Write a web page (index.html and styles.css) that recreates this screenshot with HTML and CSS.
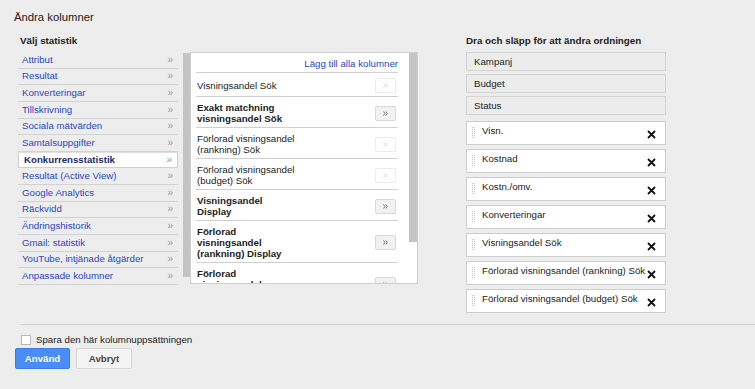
FILE: index.html
```html
<!DOCTYPE html>
<html lang="sv">
<head>
<meta charset="utf-8">
<title>Ändra kolumner</title>
<link rel="stylesheet" href="styles.css">
</head>
<body>
<div class="dialog">
  <h1 class="title">Ändra kolumner</h1>
  <div class="cols">
    <div class="cats">
      <h2 class="head">Välj statistik</h2>
      <ul class="cat-list">
        <li class="cat"><span>Attribut</span><span class="chev">»</span></li>
        <li class="cat"><span>Resultat</span><span class="chev">»</span></li>
        <li class="cat"><span>Konverteringar</span><span class="chev">»</span></li>
        <li class="cat"><span>Tillskrivning</span><span class="chev">»</span></li>
        <li class="cat"><span>Sociala mätvärden</span><span class="chev">»</span></li>
        <li class="cat"><span>Samtalsuppgifter</span><span class="chev">»</span></li>
        <li class="cat selected"><span>Konkurrensstatistik</span><span class="chev">»</span></li>
        <li class="cat"><span>Resultat (Active View)</span><span class="chev">»</span></li>
        <li class="cat"><span>Google Analytics</span><span class="chev">»</span></li>
        <li class="cat"><span>Räckvidd</span><span class="chev">»</span></li>
        <li class="cat"><span>Ändringshistorik</span><span class="chev">»</span></li>
        <li class="cat"><span>Gmail: statistik</span><span class="chev">»</span></li>
        <li class="cat"><span>YouTube, intjänade åtgärder</span><span class="chev">»</span></li>
        <li class="cat"><span>Anpassade kolumner</span><span class="chev">»</span></li>
      </ul>
    </div>
    <div class="picker">
      <div class="strip"></div>
      <div class="panel">
        <div class="panel-body">
          <div class="add-all"><a href="#">Lägg till alla kolumner</a></div>
          <div class="metric"><span class="mname">Visningsandel Sök</span><button class="add off" aria-label="Lägg till"><svg width="5" height="5" viewBox="0 0 5 5"><path d="M0.5 0.5L2 2.5L0.5 4.5M2.8 0.5L4.3 2.5L2.8 4.5" fill="none" stroke="currentColor" stroke-width="0.9"/></svg></button></div>
          <div class="metric"><span class="mname bold">Exakt matchning<br>visningsandel Sök</span><button class="add" aria-label="Lägg till"><svg width="5" height="5" viewBox="0 0 5 5"><path d="M0.5 0.5L2 2.5L0.5 4.5M2.8 0.5L4.3 2.5L2.8 4.5" fill="none" stroke="currentColor" stroke-width="0.9"/></svg></button></div>
          <div class="metric"><span class="mname">Förlorad visningsandel<br>(rankning) Sök</span><button class="add off" aria-label="Lägg till"><svg width="5" height="5" viewBox="0 0 5 5"><path d="M0.5 0.5L2 2.5L0.5 4.5M2.8 0.5L4.3 2.5L2.8 4.5" fill="none" stroke="currentColor" stroke-width="0.9"/></svg></button></div>
          <div class="metric"><span class="mname">Förlorad visningsandel<br>(budget) Sök</span><button class="add off" aria-label="Lägg till"><svg width="5" height="5" viewBox="0 0 5 5"><path d="M0.5 0.5L2 2.5L0.5 4.5M2.8 0.5L4.3 2.5L2.8 4.5" fill="none" stroke="currentColor" stroke-width="0.9"/></svg></button></div>
          <div class="metric"><span class="mname bold">Visningsandel<br>Display</span><button class="add" aria-label="Lägg till"><svg width="5" height="5" viewBox="0 0 5 5"><path d="M0.5 0.5L2 2.5L0.5 4.5M2.8 0.5L4.3 2.5L2.8 4.5" fill="none" stroke="currentColor" stroke-width="0.9"/></svg></button></div>
          <div class="metric"><span class="mname bold">Förlorad<br>visningsandel<br>(rankning) Display</span><button class="add" aria-label="Lägg till"><svg width="5" height="5" viewBox="0 0 5 5"><path d="M0.5 0.5L2 2.5L0.5 4.5M2.8 0.5L4.3 2.5L2.8 4.5" fill="none" stroke="currentColor" stroke-width="0.9"/></svg></button></div>
          <div class="metric"><span class="mname bold">Förlorad<br>visningsandel<br>(budget) Display</span><button class="add" aria-label="Lägg till"><svg width="5" height="5" viewBox="0 0 5 5"><path d="M0.5 0.5L2 2.5L0.5 4.5M2.8 0.5L4.3 2.5L2.8 4.5" fill="none" stroke="currentColor" stroke-width="0.9"/></svg></button></div>
        </div>
        <div class="vscroll"><div class="thumb"></div></div>
      </div>
    </div>
    <div class="order">
      <h2 class="head">Dra och släpp för att ändra ordningen</h2>
      <div class="fixed">Kampanj</div>
      <div class="fixed">Budget</div>
      <div class="fixed">Status</div>
      <div class="drag-list">
        <div class="drag"><svg class="grip" width="3" height="11" viewBox="0 0 3 11"><g fill="#c4c4c4"><rect x="0" y="0" width="1" height="1"/><rect x="2" y="0" width="1" height="1"/><rect x="0" y="2" width="1" height="1"/><rect x="2" y="2" width="1" height="1"/><rect x="0" y="4" width="1" height="1"/><rect x="2" y="4" width="1" height="1"/><rect x="0" y="6" width="1" height="1"/><rect x="2" y="6" width="1" height="1"/><rect x="0" y="8" width="1" height="1"/><rect x="2" y="8" width="1" height="1"/><rect x="0" y="10" width="1" height="1"/><rect x="2" y="10" width="1" height="1"/></g></svg><span class="dname">Visn.</span><svg class="x" width="9" height="9" viewBox="0 0 9 9"><path d="M1 1L8 8M8 1L1 8" stroke="#111" stroke-width="1.8" fill="none"/></svg></div>
        <div class="drag"><svg class="grip" width="3" height="11" viewBox="0 0 3 11"><g fill="#c4c4c4"><rect x="0" y="0" width="1" height="1"/><rect x="2" y="0" width="1" height="1"/><rect x="0" y="2" width="1" height="1"/><rect x="2" y="2" width="1" height="1"/><rect x="0" y="4" width="1" height="1"/><rect x="2" y="4" width="1" height="1"/><rect x="0" y="6" width="1" height="1"/><rect x="2" y="6" width="1" height="1"/><rect x="0" y="8" width="1" height="1"/><rect x="2" y="8" width="1" height="1"/><rect x="0" y="10" width="1" height="1"/><rect x="2" y="10" width="1" height="1"/></g></svg><span class="dname">Kostnad</span><svg class="x" width="9" height="9" viewBox="0 0 9 9"><path d="M1 1L8 8M8 1L1 8" stroke="#111" stroke-width="1.8" fill="none"/></svg></div>
        <div class="drag"><svg class="grip" width="3" height="11" viewBox="0 0 3 11"><g fill="#c4c4c4"><rect x="0" y="0" width="1" height="1"/><rect x="2" y="0" width="1" height="1"/><rect x="0" y="2" width="1" height="1"/><rect x="2" y="2" width="1" height="1"/><rect x="0" y="4" width="1" height="1"/><rect x="2" y="4" width="1" height="1"/><rect x="0" y="6" width="1" height="1"/><rect x="2" y="6" width="1" height="1"/><rect x="0" y="8" width="1" height="1"/><rect x="2" y="8" width="1" height="1"/><rect x="0" y="10" width="1" height="1"/><rect x="2" y="10" width="1" height="1"/></g></svg><span class="dname">Kostn./omv.</span><svg class="x" width="9" height="9" viewBox="0 0 9 9"><path d="M1 1L8 8M8 1L1 8" stroke="#111" stroke-width="1.8" fill="none"/></svg></div>
        <div class="drag"><svg class="grip" width="3" height="11" viewBox="0 0 3 11"><g fill="#c4c4c4"><rect x="0" y="0" width="1" height="1"/><rect x="2" y="0" width="1" height="1"/><rect x="0" y="2" width="1" height="1"/><rect x="2" y="2" width="1" height="1"/><rect x="0" y="4" width="1" height="1"/><rect x="2" y="4" width="1" height="1"/><rect x="0" y="6" width="1" height="1"/><rect x="2" y="6" width="1" height="1"/><rect x="0" y="8" width="1" height="1"/><rect x="2" y="8" width="1" height="1"/><rect x="0" y="10" width="1" height="1"/><rect x="2" y="10" width="1" height="1"/></g></svg><span class="dname">Konverteringar</span><svg class="x" width="9" height="9" viewBox="0 0 9 9"><path d="M1 1L8 8M8 1L1 8" stroke="#111" stroke-width="1.8" fill="none"/></svg></div>
        <div class="drag"><svg class="grip" width="3" height="11" viewBox="0 0 3 11"><g fill="#c4c4c4"><rect x="0" y="0" width="1" height="1"/><rect x="2" y="0" width="1" height="1"/><rect x="0" y="2" width="1" height="1"/><rect x="2" y="2" width="1" height="1"/><rect x="0" y="4" width="1" height="1"/><rect x="2" y="4" width="1" height="1"/><rect x="0" y="6" width="1" height="1"/><rect x="2" y="6" width="1" height="1"/><rect x="0" y="8" width="1" height="1"/><rect x="2" y="8" width="1" height="1"/><rect x="0" y="10" width="1" height="1"/><rect x="2" y="10" width="1" height="1"/></g></svg><span class="dname">Visningsandel Sök</span><svg class="x" width="9" height="9" viewBox="0 0 9 9"><path d="M1 1L8 8M8 1L1 8" stroke="#111" stroke-width="1.8" fill="none"/></svg></div>
        <div class="drag"><svg class="grip" width="3" height="11" viewBox="0 0 3 11"><g fill="#c4c4c4"><rect x="0" y="0" width="1" height="1"/><rect x="2" y="0" width="1" height="1"/><rect x="0" y="2" width="1" height="1"/><rect x="2" y="2" width="1" height="1"/><rect x="0" y="4" width="1" height="1"/><rect x="2" y="4" width="1" height="1"/><rect x="0" y="6" width="1" height="1"/><rect x="2" y="6" width="1" height="1"/><rect x="0" y="8" width="1" height="1"/><rect x="2" y="8" width="1" height="1"/><rect x="0" y="10" width="1" height="1"/><rect x="2" y="10" width="1" height="1"/></g></svg><span class="dname">Förlorad visningsandel (rankning) Sök</span><svg class="x" width="9" height="9" viewBox="0 0 9 9"><path d="M1 1L8 8M8 1L1 8" stroke="#111" stroke-width="1.8" fill="none"/></svg></div>
        <div class="drag"><svg class="grip" width="3" height="11" viewBox="0 0 3 11"><g fill="#c4c4c4"><rect x="0" y="0" width="1" height="1"/><rect x="2" y="0" width="1" height="1"/><rect x="0" y="2" width="1" height="1"/><rect x="2" y="2" width="1" height="1"/><rect x="0" y="4" width="1" height="1"/><rect x="2" y="4" width="1" height="1"/><rect x="0" y="6" width="1" height="1"/><rect x="2" y="6" width="1" height="1"/><rect x="0" y="8" width="1" height="1"/><rect x="2" y="8" width="1" height="1"/><rect x="0" y="10" width="1" height="1"/><rect x="2" y="10" width="1" height="1"/></g></svg><span class="dname">Förlorad visningsandel (budget) Sök</span><svg class="x" width="9" height="9" viewBox="0 0 9 9"><path d="M1 1L8 8M8 1L1 8" stroke="#111" stroke-width="1.8" fill="none"/></svg></div>
      </div>
    </div>
  </div>
  <div class="footer">
    <div class="rule"></div>
    <label class="save"><span class="box"></span><span>Spara den här kolumnuppsättningen</span></label>
    <div class="actions">
      <button class="btn primary">Använd</button>
      <button class="btn">Avbryt</button>
    </div>
  </div>
</div>
</body>
</html>
```

FILE: styles.css
```css
* { box-sizing: border-box; }
html, body { margin: 0; padding: 0; }
body {
  background: #ededed;
  font-family: "Liberation Sans", Arial, sans-serif;
  font-size: 9.7px;
  color: #222;
  width: 755px;
  height: 389px;
  overflow: hidden;
}
.title {
  margin: 0;
  height: 30px;
  padding: 11px 0 0 14px;
  font-size: 11.3px;
  line-height: 13px;
  font-weight: normal;
  color: #222;
}
.cols {
  display: flex;
  align-items: flex-start;
}
.head {
  margin: 0;
  height: 22px;
  line-height: 22px;
  font-size: 9.8px;
  font-weight: bold;
  color: #222;
}
.cats {
  margin-left: 18px;
  width: 160px;
}
.cats .head { padding-left: 2px; }
.cat-list {
  list-style: none;
  margin: 0;
  padding: 0;
}
.cat {
  height: 16.64px;
  border-bottom: 1px solid #d2d2d2;
  display: flex;
  align-items: center;
  justify-content: space-between;
  padding: 0 5px 0 4px;
  color: #2b47c2;
  line-height: 12px;
}
.cat.selected {
  background: #fff;
  border: 1px solid #d0d0d0;
  border-top-color: #e0e0e0;
  font-weight: bold;
  color: #1c2766;
  padding-left: 5px;
}
.chev {
  color: #9a9a9a;
  font-weight: normal;
  font-size: 10px;
}
.picker {
  display: flex;
  align-items: flex-start;
  margin-top: 22px;
  margin-left: 5px;
}
.strip {
  width: 7px;
  height: 224px;
  margin-top: 1px;
  background: #c4c4c4;
}
.panel {
  display: flex;
  width: 228px;
  height: 232px;
  background: #fff;
  border: 1px solid #cfcfcf;
  overflow: hidden;
}
.panel-body {
  flex: 1;
  padding: 0 11px 0 5px;
  overflow: hidden;
}
.add-all {
  height: 20px;
  border-bottom: 1px solid #d0d0d0;
  text-align: right;
  padding-top: 5px;
  line-height: 11px;
}
.add-all a {
  color: #2b47c2;
  text-decoration: none;
}
.metric {
  display: flex;
  align-items: center;
  justify-content: space-between;
  border-bottom: 1px solid #d0d0d0;
  padding: 5px 2px 3px 1px;
  line-height: 11px;
}
.mname { color: #222; }
.mname.bold { font-weight: bold; }
.add {
  width: 21px;
  height: 15px;
  padding: 0;
  margin: 0;
  display: flex;
  align-items: center;
  justify-content: center;
  color: #666;
  background: #f1f1f1;
  border: 1px solid #d8d8d8;
  border-radius: 2px;
}
.add svg { display: block; }
.add.off {
  background: #fff;
  border-color: #ebebeb;
  color: #d2d2d2;
}
.vscroll {
  width: 8px;
  background: #fff;
}
.thumb {
  height: 189px;
  background: #c4c4c4;
}
.order {
  margin-left: 48px;
  width: 200px;
}
.fixed {
  height: 19px;
  margin-bottom: 3px;
  border: 1px solid #d4d4d4;
  background: #ececec;
  padding-left: 7px;
  line-height: 17px;
  color: #222;
}
.drag-list {
  display: flex;
  flex-direction: column;
  gap: 4px;
  padding-top: 3px;
}
.drag {
  height: 24px;
  background: #fff;
  border: 1px solid #cdcdcd;
  display: flex;
  align-items: flex-start;
  padding: 3px 0 0 5px;
  line-height: 12px;
}
.grip {
  flex: none;
  margin-top: 2px;
  margin-right: 7px;
}
.dname {
  flex: 1;
  min-width: 0;
  white-space: nowrap;
}
.x {
  flex: none;
  margin: 5px 9px 0 3px;
}
.footer {
  margin-top: 11px;
}
.rule {
  margin-left: 21px;
  border-top: 1px solid #cfcfcf;
}
.save {
  display: flex;
  align-items: center;
  margin: 10px 0 0 21px;
  height: 10px;
  line-height: 12px;
  color: #222;
}
.box {
  width: 10px;
  height: 10px;
  background: #fff;
  border: 1px solid #b9b9b9;
  margin-right: 5px;
}
.actions {
  display: flex;
  gap: 6px;
  margin: 3px 0 0 15px;
}
.btn {
  width: 56px;
  height: 21px;
  padding: 0;
  font-family: inherit;
  font-size: 9.7px;
  font-weight: bold;
  color: #444;
  background: #f4f4f4;
  border: 1px solid #d6d6d6;
  border-radius: 2px;
}
.btn.primary {
  width: 55px;
  color: #fff;
  background: #4b8df8;
  border-color: #3a7bea;
}
```
